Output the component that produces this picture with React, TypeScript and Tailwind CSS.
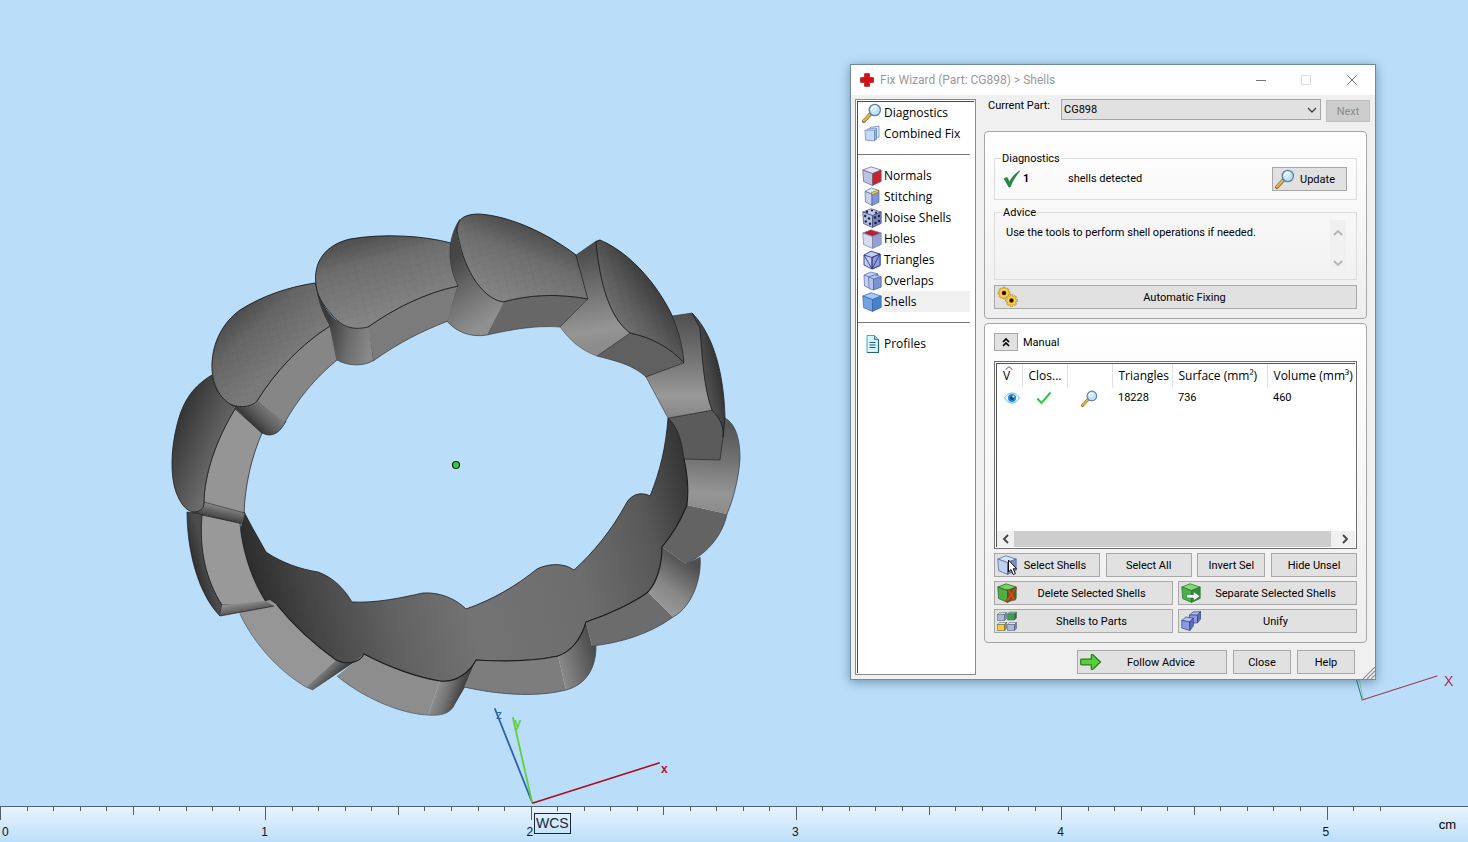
import type { ReactNode } from "react";

type CubeProps = { top: string; left: string; right: string; line?: string; size?: string; children?: ReactNode };

function Cube({ top, left, right, line = "#4a5f96", size = "size-5", children }: CubeProps) {
  return (
    <svg viewBox="0 0 20 20" className={`${size} shrink-0`} aria-hidden="true" strokeLinejoin="round">
      <path d="M.8 4 9 .8 19.2 4 10.5 7.6Z" fill={top} stroke={line} strokeWidth=".7" />
      <path d="M.8 4 10.5 7.6V19.4L1.6 15.6Z" fill={left} stroke={line} strokeWidth=".7" />
      <path d="M10.5 7.6 19.2 4V15.4L10.5 19.4Z" fill={right} stroke={line} strokeWidth=".7" />
      {children}
    </svg>
  );
}

function Magnifier({ size = "size-5" }: { size?: string }) {
  return (
    <svg viewBox="0 0 20 20" className={`${size} shrink-0`} aria-hidden="true">
      <path d="M1.8 18.2 8.2 11.2" stroke="#8a6a2c" strokeWidth="3.600" strokeLinecap="round" />
      <path d="M2 17.8 7.6 11.8" stroke="#e2b650" strokeWidth="2.200" strokeLinecap="round" />
      <circle cx="12.8" cy="7" r="5.6" fill="#bfe2f7" stroke="#5d83a6" strokeWidth="1.4" />
      <path d="M9.6 6.4c.4-1.8 2.200-3 4.200-2.600" stroke="#fff" strokeWidth="1.400" fill="none" strokeLinecap="round" />
      <path d="m10.500 9 4.500-4.500" stroke="#e8f6ff" strokeWidth="1.500" />
    </svg>
  );
}

function CombinedIcon() {
  return (
    <svg viewBox="0 0 20 20" className="size-5 shrink-0" aria-hidden="true" stroke="#6f8fc4" strokeWidth=".8" strokeLinejoin="round">
      <path d="M8 3.500 17 2v11l-9 1.500Z" fill="#dce8fa" />
      <path d="M5.500 5 14.500 4v11l-9 1Z" fill="#cfe0f8" />
      <path d="M3 6.200h9.500V17L3.500 16Z" fill="#c6daf6" />
      <path d="m12.500 6.200 2-1.700V15l-2 2Z" fill="#8fb0e2" />
    </svg>
  );
}

function StitchingIcon() {
  return (
    <svg viewBox="0 0 20 20" className="size-5 shrink-0" aria-hidden="true" stroke="#55689e" strokeWidth=".7" strokeLinejoin="round">
      <path d="M3 4.500 9.500 1 17 3.500 10 7Z" fill="#e3e9f8" />
      <path d="m3 4.500 7 2.500v11.500l-6.500-3.500Z" fill="#c6d2f0" />
      <path d="m10 7 7-3.500v11.800l-7 3.200Z" fill="#7f94d0" />
      <path d="M9.500 7.800V5.600L16.500 3v2.200Z" fill="#f3d95a" stroke="#8d7a21" />
    </svg>
  );
}

function NoiseIcon() {
  return (
    <Cube top="#c7d0ea" left="#b4c0e4" right="#7685bd" line="#3d4875">
      <g fill="#1d2440">
        <circle cx="5" cy="3.800" r="1.200" /><circle cx="10" cy="2.600" r="1.100" /><circle cx="14" cy="4.600" r="1.200" />
        <circle cx="3.200" cy="8" r="1.200" /><circle cx="7" cy="10.500" r="1.300" />
        <circle cx="3.800" cy="13.500" r="1.200" /><circle cx="8" cy="15.800" r="1.200" /><circle cx="13" cy="9.500" r="1.300" />
        <circle cx="17" cy="8" r="1.200" /><circle cx="13.500" cy="15" r="1.300" /><circle cx="17" cy="13" r="1.200" />
      </g>
    </Cube>
  );
}

function TrianglesIcon() {
  return (
    <svg viewBox="0 0 20 20" className="size-5 shrink-0" aria-hidden="true" stroke="#303c86" strokeWidth=".9" strokeLinejoin="round">
      <path d="M2 5 9 1.200 18 4v11.500L10 19 2 15Z" fill="#c3cdf0" />
      <path d="m10 7.500 8-3.500v11.500L10 19Z" fill="#8e9dda" />
      <path d="m2 5 8 2.500L18 4M10 7.500V19M2 5l8 14 8-15" fill="none" />
    </svg>
  );
}

function OverlapsIcon() {
  return (
    <svg viewBox="0 0 20 20" className="size-5 shrink-0" aria-hidden="true" stroke="#5669a8" strokeWidth=".7" strokeLinejoin="round">
      <path d="M2 4 9 1l7 2-1 12-7 2.500-5.500-2.500Z" fill="#c3d0f0" />
      <path d="m2 4 5.500 2.200L16 3" fill="none" />
      <path d="m6.500 6 6-2.200L19 5.500V16l-8 3-4-1.500Z" fill="#b3c3ec" />
      <path d="M11.500 8 19 5.500V16l-7.500 3Z" fill="#7d92d2" />
      <path d="m6.500 6 5 2v11" fill="none" />
    </svg>
  );
}

function ProfilesIcon() {
  return (
    <svg viewBox="0 0 20 20" className="size-5 shrink-0" aria-hidden="true" strokeLinejoin="round">
      <path d="M5 1.500h7.500l4 4v13H5Z" fill="#d9f4f8" stroke="#4aa5b5" />
      <path d="M5 18.500h11.500v-13" fill="none" stroke="#1f6a7a" strokeWidth="1.200" />
      <path d="M12.500 1.500v4h4" fill="#8fd3df" stroke="#2e8798" />
      <path d="M7.500 8.500h6M7.500 11h6M7.500 13.500h6" stroke="#1e5b82" strokeWidth="1.100" />
    </svg>
  );
}

function Check({ thick = false }: { thick?: boolean }) {
  return thick ? (
    <svg viewBox="0 0 18 18" className="size-[18px]" aria-hidden="true">
      <path d="M1 8.500 4.200 7.500 6.500 12C9 7 12.500 3 17 .8 13 5.500 9.500 11 7.200 17H5.800Z" fill="#23864a" stroke="#146034" strokeWidth=".5" />
    </svg>
  ) : (
    <svg viewBox="0 0 16 16" className="size-4" aria-hidden="true">
      <path d="M1.200 8.500 5.500 13 14.500 2.500" fill="none" stroke="#2fc44f" strokeWidth="2" />
    </svg>
  );
}

function Eye() {
  return (
    <svg viewBox="0 0 16 12" className="h-3 w-4" aria-hidden="true">
      <path d="M.6 6C3 2.200 5.500 1 8 1s5 1.200 7.400 5C13 9.800 10.500 11 8 11S3 9.800.6 6Z" fill="#eaf5fd" stroke="#6db4e2" />
      <circle cx="8" cy="6" r="4" fill="#2189cf" />
      <circle cx="8" cy="6" r="1.900" fill="#0b3f73" />
      <circle cx="9.300" cy="4.600" r="1" fill="#fff" />
    </svg>
  );
}

function Gear({ cx, cy }: { cx: number; cy: number }) {
  return (
    <g transform={`translate(${cx} ${cy})`}>
      {[0, 45, 90, 135].map((a) => (
        <rect key={a} x="-1.400" y="-6" width="2.800" height="12" rx=".6" fill="#f0bb3c" stroke="#a87a2a" strokeWidth=".5" transform={`rotate(${a})`} />
      ))}
      <circle r="4.200" fill="#f7d24e" />
      <circle r="2.300" fill="#5a1f10" />
      <circle r="1.500" fill="#1d0a05" />
    </g>
  );
}

function GearsIcon() {
  return (
    <svg viewBox="0 0 22 22" className="size-[22px]" aria-hidden="true">
      <Gear cx={7} cy={7} />
      <Gear cx={14.5} cy={14.5} />
    </svg>
  );
}

function SelectShellsIcon() {
  return (
    <Cube top="#dbe3f8" left="#c4d0f2" right="#7f90cc">
      <path d="M11.500 5v12l2.500-2.400 2.200 5 2.200-1-2.200-4.800h3.400Z" fill="#fff" stroke="#111" strokeWidth="1" />
    </Cube>
  );
}

function DeleteShellsIcon() {
  return (
    <Cube top="#7fcf62" left="#4fae44" right="#2f7c34" line="#245e28">
      <path d="m9.500 6.500 3 .4 2 2.600L17.500 5l2.300-.2-3.600 6.400 2.600 5.600-3 .8-1.800-3.400-2.600 4-3 .4 4.200-7Z" fill="#d9481c" stroke="#8a2a0f" strokeWidth=".5" />
    </Cube>
  );
}

function SeparateShellsIcon() {
  return (
    <Cube top="#8bd672" left="#4bb14a" right="#2f8f3c" line="#257030">
      <path d="M5.500 11.500h7V8.600l6.500 4.700-6.500 4.500V15h-7Z" fill="#f2fff0" stroke="#257030" strokeWidth=".6" />
    </Cube>
  );
}

function PartsIcon() {
  const boxes = [
    { x: 0, y: 1, front: "#a9bbd9", top: "#dbe5f4", side: "#7b8fb8" },
    { x: 10, y: 0.5, front: "#3fa04a", top: "#7fce80", side: "#26732f" },
    { x: 0, y: 11, front: "#f6cf2d", top: "#fbe98a", side: "#b58e12" },
    { x: 10, y: 11, front: "#a9b9dd", top: "#dce5f6", side: "#6f82ad" },
  ];
  return (
    <svg viewBox="0 0 20 20" className="size-5" aria-hidden="true" stroke="#4c5a70" strokeWidth=".5" strokeLinejoin="round">
      {boxes.map((b, i) => (
        <g key={i} transform={`translate(${b.x} ${b.y})`}>
          <path d="M.5 2.500 2.500.5h7l-2 2Z" fill={b.top} />
          <path d="M.5 2.500h7v6h-7Z" fill={b.front} />
          <path d="m7.500 2.500 2-2v6l-2 2Z" fill={b.side} />
        </g>
      ))}
    </svg>
  );
}

function UnifyIcon() {
  return (
    <svg viewBox="0 0 20 20" className="size-5" aria-hidden="true" stroke="#333f86" strokeWidth=".7" strokeLinejoin="round">
      <path d="m8.500 4 3.500-3 7.500-.5-3 3.700Z" fill="#b2bfee" />
      <path d="m8.500 4 8 .2v7.600l-8 .7Z" fill="#8c9ce0" />
      <path d="m16.500 4.200 3-3.700v7.600l-3 3.700Z" fill="#5c6dbd" />
      <path d="m.8 9.500 4-3.500 7.500 1-3.500 4Z" fill="#b2bfee" />
      <path d="m.8 9.500 8 1.500v8.500l-8-2.500Z" fill="#8c9ce0" />
      <path d="m8.800 11 3.500-4v8l-3.500 4.500Z" fill="#5c6dbd" />
    </svg>
  );
}

function ArrowIcon() {
  return (
    <svg viewBox="0 0 22 18" className="h-[18px] w-[22px]" aria-hidden="true">
      <path d="M1.500 6.200h9.800V2.500q0-1.500 1.600-.8L20.500 9l-7.600 7.300q-1.600.7-1.600-.8v-3.700H1.500q-.8 0-.8-1V7q0-.8.8-.8Z" fill="#58cf3a" stroke="#2a7a1c" strokeWidth="1.200" strokeLinejoin="round" />
    </svg>
  );
}

function Chevron({ dir, tone = "#404040", weight = 1.8 }: { dir: "up" | "down" | "left" | "right"; tone?: string; weight?: number }) {
  const d = { up: "M1 7 5 3l4 4", down: "M1 3l4 4 4-4", left: "M7 1 3 5l4 4", right: "M3 1l4 4-4 4" }[dir];
  return (
    <svg viewBox="0 0 10 10" className="size-[10px] shrink-0" aria-hidden="true">
      <path d={d} fill="none" stroke={tone} strokeWidth={weight} />
    </svg>
  );
}

const EDGE = "#1c1c1c";

const DOME_H = "M315 283C288 287 262 296 240 310 222 323 213 343 212 363 211 384 220 399 232 405 242 408 251 407 257 401 275 372 300 345 330 326L322 300Z";
const DOME_I = "M316 285C313 262 325 245 350 239 385 233 425 236 451 243L458 286C425 293 395 308 368 327 352 331 341 326 332 315 322 304 317 295 316 285Z";
const DOME_J = "M457 230C457 218 466 214 479 214 510 216 547 233 576 255L588 299C555 293 528 295 503 302 480 298 462 265 457 230Z";
const DOME_K = "M596 242 600 240C638 256 668 300 678 330 682 344 684 355 684 363 670 347 650 337 630 333 610 318 600 285 596 242Z";

function Ring() {
  return (
    <g strokeLinejoin="round">
      <defs>
        <pattern id="mesh" width="9" height="7" patternUnits="userSpaceOnUse" patternTransform="rotate(-14)">
          <path d="M0 0H9M0 0V7" stroke="#000" strokeOpacity=".04" strokeWidth="1.500" />
        </pattern>
        <linearGradient id="inner" gradientUnits="userSpaceOnUse" x1="245" y1="560" x2="690" y2="450">
          <stop offset="0" stopColor="#2c2c2c" />
          <stop offset=".12" stopColor="#464646" />
          <stop offset=".28" stopColor="#616161" />
          <stop offset=".45" stopColor="#737373" />
          <stop offset=".7" stopColor="#6d6d6d" />
          <stop offset=".87" stopColor="#585858" />
          <stop offset="1" stopColor="#303030" />
        </linearGradient>
        <linearGradient id="domeA" gradientUnits="userSpaceOnUse" x1="172" y1="440" x2="222" y2="462">
          <stop offset="0" stopColor="#383838" />
          <stop offset="1" stopColor="#6e6e6e" />
        </linearGradient>
        <linearGradient id="domeB" gradientUnits="userSpaceOnUse" x1="190" y1="560" x2="205" y2="556">
          <stop offset="0" stopColor="#2c2c2c" />
          <stop offset="1" stopColor="#4c4c4c" />
        </linearGradient>
        <linearGradient id="domeH" gradientUnits="userSpaceOnUse" x1="225" y1="315" x2="275" y2="370">
          <stop offset="0" stopColor="#474747" />
          <stop offset=".4" stopColor="#666666" />
          <stop offset="1" stopColor="#7a7a7a" />
        </linearGradient>
        <linearGradient id="domeI" gradientUnits="userSpaceOnUse" x1="360" y1="234" x2="383" y2="318">
          <stop offset="0" stopColor="#4c4c4c" />
          <stop offset=".35" stopColor="#6e6e6e" />
          <stop offset="1" stopColor="#858585" />
        </linearGradient>
        <linearGradient id="domeJ" gradientUnits="userSpaceOnUse" x1="530" y1="226" x2="503" y2="295">
          <stop offset="0" stopColor="#4c4c4c" />
          <stop offset=".4" stopColor="#6e6e6e" />
          <stop offset="1" stopColor="#838383" />
        </linearGradient>
        <linearGradient id="domeK" gradientUnits="userSpaceOnUse" x1="654" y1="282" x2="615" y2="312">
          <stop offset="0" stopColor="#3c3c3c" />
          <stop offset=".6" stopColor="#5c5c5c" />
          <stop offset="1" stopColor="#6e6e6e" />
        </linearGradient>
        <linearGradient id="domeL" gradientUnits="userSpaceOnUse" x1="722" y1="370" x2="704" y2="374">
          <stop offset="0" stopColor="#2f2f2f" />
          <stop offset="1" stopColor="#505050" />
        </linearGradient>
        <linearGradient id="bevA" gradientUnits="userSpaceOnUse" x1="226" y1="506" x2="223" y2="520">
          <stop offset="0" stopColor="#8c8c8c" />
          <stop offset="1" stopColor="#3f3f3f" />
        </linearGradient>
        <linearGradient id="bevB" gradientUnits="userSpaceOnUse" x1="244" y1="602" x2="246" y2="614">
          <stop offset="0" stopColor="#919191" />
          <stop offset="1" stopColor="#4a4a4a" />
        </linearGradient>
        <linearGradient id="bevC" gradientUnits="userSpaceOnUse" x1="320" y1="668" x2="334" y2="682">
          <stop offset="0" stopColor="#959595" />
          <stop offset="1" stopColor="#333333" />
        </linearGradient>
        <linearGradient id="bevD" gradientUnits="userSpaceOnUse" x1="434" y1="692" x2="464" y2="702">
          <stop offset="0" stopColor="#929292" />
          <stop offset=".4" stopColor="#747474" />
          <stop offset="1" stopColor="#303030" />
        </linearGradient>
        <linearGradient id="bevE" gradientUnits="userSpaceOnUse" x1="561" y1="670" x2="597" y2="660">
          <stop offset="0" stopColor="#8a8a8a" />
          <stop offset="1" stopColor="#4c4c4c" />
        </linearGradient>
        <linearGradient id="bevF" gradientUnits="userSpaceOnUse" x1="660" y1="604" x2="690" y2="562">
          <stop offset="0" stopColor="#979797" />
          <stop offset=".35" stopColor="#878787" />
          <stop offset="1" stopColor="#4e4e4e" />
        </linearGradient>
        <linearGradient id="bevG" gradientUnits="userSpaceOnUse" x1="712" y1="425" x2="706" y2="510">
          <stop offset="0" stopColor="#565656" />
          <stop offset=".4" stopColor="#727272" />
          <stop offset=".8" stopColor="#969696" />
          <stop offset="1" stopColor="#8c8c8c" />
        </linearGradient>
        <linearGradient id="bevH" gradientUnits="userSpaceOnUse" x1="246" y1="424" x2="268" y2="402">
          <stop offset="0" stopColor="#2a2a2a" />
          <stop offset=".5" stopColor="#5c5c5c" />
          <stop offset="1" stopColor="#858585" />
        </linearGradient>
        <linearGradient id="bevI" gradientUnits="userSpaceOnUse" x1="325" y1="335" x2="373" y2="345">
          <stop offset="0" stopColor="#3a3a3a" />
          <stop offset=".5" stopColor="#6c6c6c" />
          <stop offset="1" stopColor="#8b8b8b" />
        </linearGradient>
        <linearGradient id="bevJ" gradientUnits="userSpaceOnUse" x1="452" y1="260" x2="492" y2="318">
          <stop offset="0" stopColor="#464646" />
          <stop offset=".5" stopColor="#6e6e6e" />
          <stop offset="1" stopColor="#909090" />
        </linearGradient>
        <linearGradient id="bevK" gradientUnits="userSpaceOnUse" x1="586" y1="250" x2="600" y2="345">
          <stop offset="0" stopColor="#4c4c4c" />
          <stop offset=".5" stopColor="#777777" />
          <stop offset=".85" stopColor="#969696" />
          <stop offset="1" stopColor="#8c8c8c" />
        </linearGradient>
        <linearGradient id="bevL" gradientUnits="userSpaceOnUse" x1="684" y1="315" x2="684" y2="416">
          <stop offset="0" stopColor="#505050" />
          <stop offset=".45" stopColor="#757575" />
          <stop offset=".8" stopColor="#999999" />
          <stop offset="1" stopColor="#888888" />
        </linearGradient>
      </defs>

      <path d="M244 512 252 527 266 552C282 563 300 569 318 572 332 577 343 587 352 602 378 603 400 598 423 593 439 592 455 598 466 609 492 600 516 586 537 569 547 564 563 562 574 570 593 553 612 530 627 502 633 493 643 492 650 496 660 472 666 446 668 418L678 424 684 459C687 472 689 488 687 505 681 520 672 535 662 547 662 565 657 582 648 592 635 602 610 614 586 622 581 640 570 652 558 656 540 660 510 662 476 660 470 672 456 683 440 681 420 678 390 668 364 654 360 662 348 666 336 660 315 645 293 625 277 605L262 606 236 560Z" fill="url(#inner)" stroke={EDGE} strokeWidth=".8" />

      <path d="M236 608 270 600 277 605C293 625 315 645 336 660L306 687C280 672 254 644 240 614Z" fill="#969696" />
      <path d="M187 512 203 514C200 550 206 580 222 605L220 616C198 594 187 550 187 512Z" fill="url(#domeB)" stroke={EDGE} strokeWidth=".7" />
      <path d="M202 515 240 523C242 550 252 582 268 605L222 605C206 580 199 550 202 515Z" fill="#999999" stroke={EDGE} strokeWidth=".8" />
      <path d="M222 605 266 601 274 606 220 616Z" fill="url(#bevB)" />
      <path d="M274 606 220 616" stroke={EDGE} strokeWidth=".7" />
      <path d="M336 660C344 664 350 664 356 661L313 690 306 687Z" fill="url(#bevC)" />
      <path d="M240 614C254 644 280 672 306 687L313 690" fill="none" stroke="#4a5560" strokeWidth=".7" />
      <path d="M364 654C390 668 420 678 440 681L428 715C400 714 362 697 337 676Z" fill="#8d8d8d" />
      <path d="M440 681C456 683 470 672 476 660L465 687 454 706C449 714 440 716 428 715Z" fill="url(#bevD)" />
      <path d="M337 676C362 697 400 714 428 715 440 716 449 714 454 706" fill="none" stroke="#4a5560" strokeWidth=".7" />
      <path d="M476 660C510 662 540 660 558 656L566 690C534 698 495 694 464 687Z" fill="#7d7d7d" />
      <path d="M558 656C570 652 581 640 586 622L592 646 596 646C596 666 588 684 566 690Z" fill="url(#bevE)" />
      <path d="M586 622C610 614 635 602 648 592L673 617C650 634 620 643 592 646Z" fill="#6c6c6c" />
      <path d="M648 592C657 582 662 565 662 547L686 564 700 557C702 578 692 607 673 617Z" fill="url(#bevF)" />
      <path d="M662 547C672 535 681 520 687 505L727 514C723 533 710 552 686 564Z" fill="#636363" />
      <path d="M687 505C689 488 687 472 684 459L684 430 725 418C736 424 740 440 740 458 739 478 733 500 727 514Z" fill="url(#bevG)" />
      <path d="M725 418C736 424 740 440 740 458 739 478 733 500 727 514 723 533 710 552 686 564M700 557C702 578 692 607 673 617 650 634 620 643 592 646M596 646C596 666 588 684 566 690 534 698 495 694 464 687" fill="none" stroke="#3c444c" strokeWidth=".8" />
      <path d="M684 459C687 472 689 488 687 505 681 520 672 535 662 547 662 565 657 582 648 592 635 602 610 614 586 622 581 640 570 652 558 656 540 660 510 662 476 660 470 672 456 683 440 681 420 678 390 668 364 654 360 662 348 666 336 660 315 645 293 625 277 605" fill="none" stroke={EDGE} strokeWidth="1.100" />

      <path d="M235 409C216 440 204 475 204 503L244 514C245 484 252 456 262 433Z" fill="#959595" stroke={EDGE} strokeWidth=".7" />
      <path d="M192 512C198 511 203 509 204 502L245 513 243 524Z" fill="url(#bevA)" stroke={EDGE} strokeWidth=".5" />
      <path d="M212 375C190 388 182 405 177 425 171 448 170 475 176 492 181 505 187 512 195 512 202 511 204 507 204 503 204 475 216 440 235 409L232 405C220 397 213 387 212 375Z" fill="url(#domeA)" stroke={EDGE} strokeWidth=".8" />

      <path d="M330 326C300 345 275 372 257 401L284 424C297 400 315 378 337 360Z" fill="#868686" stroke={EDGE} strokeWidth=".6" />
      <path d="M232 405C242 408 251 407 257 401L285 422C280 433 272 438 262 433Z" fill="url(#bevH)" />
      <path d={DOME_H} fill="url(#domeH)" stroke={EDGE} strokeWidth=".9" />
      <path d="M235 408 262 433C272 438 280 433 286 421" fill="none" stroke={EDGE} strokeWidth=".7" />

      <path d="M458 286C425 293 395 308 368 327L373 361C400 342 420 332 448 321Z" fill="#7b7b7b" stroke={EDGE} strokeWidth=".6" />
      <path d="M316 284C320 303 330 318 345 326 354 329 362 329 369 327L373 361C364 367 347 366 337 360L330 326C323 315 317 300 316 284Z" fill="url(#bevI)" />
      <path d={DOME_I} fill="url(#domeI)" stroke={EDGE} strokeWidth=".9" />
      <path d="M337 360C347 366 364 367 374 360" fill="none" stroke="#3c444c" strokeWidth=".7" />

      <path d="M503 302C528 295 555 293 588 299L560 327C535 325 510 330 487 335Z" fill="#676767" stroke={EDGE} strokeWidth=".5" />
      <path d="M460 219C448 237 446 262 458 286L447 321C455 331 470 338 487 335L504 302C480 298 459 258 457 230Z" fill="url(#bevJ)" />
      <path d={DOME_J} fill="url(#domeJ)" stroke={EDGE} strokeWidth=".9" />
      <path d="M460 219C448 237 446 262 458 286M447 321C455 331 470 338 487 335" fill="none" stroke="#343a40" strokeWidth=".7" />

      <path d="M630 333C650 337 670 347 684 363L646 377C632 364 615 361 597 356Z" fill="#606060" stroke={EDGE} strokeWidth=".5" />
      <path d="M576 255 596 241 600 240C600 290 612 320 630 333L597 356C580 350 570 340 560 327L588 299Z" fill="url(#bevK)" stroke={EDGE} strokeWidth=".4" />
      <path d={DOME_K} fill="url(#domeK)" stroke={EDGE} strokeWidth=".9" />

      <path d="M668 418 712 410C722 420 725 430 723 437L720 460 684 459C682 440 677 426 668 418Z" fill="#5b5b5b" stroke={EDGE} strokeWidth=".6" />
      <path d="M672 316 692 313 702 332C704 370 706 395 713 410L668 418 646 377 684 363C683 348 679 332 672 316Z" fill="url(#bevL)" stroke={EDGE} strokeWidth=".5" />
      <path d="M692 313C714 335 724 375 725 418L723 437C724 426 720 418 712 410 704 390 702 355 700 328Z" fill="url(#domeL)" stroke={EDGE} strokeWidth=".8" />
      <path d={`${DOME_H}${DOME_I}${DOME_J}${DOME_K}`} fill="url(#mesh)" />
    </g>
  );
}

function Scene() {
  return (
    <svg className="absolute inset-0 h-full w-full" role="img" aria-label="Ring model with coordinate axes">
      <Ring />
      <circle cx="456" cy="465" r="3.500" fill="#35c94a" stroke="#10240f" strokeWidth="1.200" />
      <g fill="none" strokeLinecap="round">
        <path d="M495 709 532 802" stroke="#2f62ad" strokeWidth="1.800" />
        <path d="M513 718 532 802" stroke="#5fd03a" strokeWidth="1.800" />
        <path d="M533 803 659 763" stroke="#a80f22" strokeWidth="1.800" />
        <path d="M1356 678 1362 699" stroke="#2b6f8d" />
        <path d="M1359 678 1363 699" stroke="#6cc98f" strokeWidth=".8" />
        <path d="M1362 700 1437 676" stroke="#a3385c" strokeWidth="1.200" />
      </g>
      <g fontFamily="Liberation Sans, sans-serif">
        <text x="496" y="719" fontSize="12" fill="#2f62ad">z</text>
        <text x="514" y="727" fontSize="13" fontWeight="700" fill="#5fd03a">y</text>
        <text x="661" y="773" fontSize="12" fontWeight="700" fill="#b0152a">x</text>
        <text x="1444" y="686" fontSize="14" fill="#b02a50">X</text>
      </g>
    </svg>
  );
}

function Ruler() {
  const pitch = 26.53;
  const ticks = Array.from({ length: 53 }, (_, i) => i);
  return (
    <footer className="relative mt-auto h-9 border-t border-[#49647c] bg-linear-to-b from-[#e9f3fc] to-[#bcdffb]">
      <svg className="block h-full w-full" role="img" aria-label="Ruler in centimetres">
        {ticks.map((i) => (
          <line key={i} x1={Math.round(i * pitch) + 0.5} x2={Math.round(i * pitch) + 0.5} y1="0" y2={i % 10 === 0 ? 13 : i % 5 === 0 ? 8 : 4} stroke="#4d6072" />
        ))}
        <g fontFamily="Liberation Sans, sans-serif" fontSize="12" fill="#111">
          {[0, 1, 2, 3, 4, 5].map((n) => (
            <text key={n} x={n === 0 ? 2 : n * pitch * 10 - 4} y="29">{n}</text>
          ))}
        </g>
      </svg>
      <span className="absolute right-3 top-2.5 font-['Liberation_Sans',sans-serif] text-[13px] leading-4 text-black">cm</span>
      <span className="absolute left-[534px] top-1.5 border border-[#15293a] px-px font-['Liberation_Sans',sans-serif] text-[14px] leading-[19px] text-[#15293a]">WCS</span>
    </footer>
  );
}

type NavItem = { label: string; icon: ReactNode; active?: boolean };

const navGroups: NavItem[][] = [
  [
    { label: "Diagnostics", icon: <Magnifier /> },
    { label: "Combined Fix", icon: <CombinedIcon /> },
  ],
  [
    { label: "Normals", icon: <Cube top="#e3e6f4" left="#b9c3e2" right="#c8242f" line="#6b5d7e" /> },
    { label: "Stitching", icon: <StitchingIcon /> },
    { label: "Noise Shells", icon: <NoiseIcon /> },
    { label: "Holes", icon: <Cube top="#b91f3a" left="#d5dbf1" right="#92a2d4" line="#7a7fae" /> },
    { label: "Triangles", icon: <TrianglesIcon /> },
    { label: "Overlaps", icon: <OverlapsIcon /> },
    { label: "Shells", icon: <Cube top="#a6c8f2" left="#6fa3e4" right="#4a7fcb" line="#3763a6" />, active: true },
  ],
  [{ label: "Profiles", icon: <ProfilesIcon /> }],
];

function Sidebar() {
  return (
    <nav className="w-[121px] shrink-0 border border-[#8a8a8a] bg-white p-px font-['Open_Sans','Noto_Sans',sans-serif]">
      <div className="h-full border-l border-t border-[#4a4a4a] pr-1">
        {navGroups.map((group, g) => (
          <ul key={g} className={g === 0 ? "" : "mt-2.5 border-t border-[#777] pt-2.5"}>
            {group.map((item) => (
              <li key={item.label}>
                <button type="button" className="flex h-[21px] w-full items-center pl-1 text-left text-[12px] leading-[21px] text-black">
                  {item.icon}
                  <span className={item.active ? "flex-1 bg-[#f0f0f0] pl-0.5" : "flex-1 pl-0.5"}>{item.label}</span>
                </button>
              </li>
            ))}
          </ul>
        ))}
      </div>
    </nav>
  );
}

function PushButton({ children, icon, className = "" }: { children: ReactNode; icon?: ReactNode; className?: string }) {
  return (
    <button type="button" className={`flex h-6 items-center border border-[#a8a8a8] bg-[#e1e1e1] pl-0.5 text-black ${icon ? "pr-1.5" : "pr-0.5"} ${className}`}>
      {icon}
      <span className="flex-1 whitespace-nowrap pt-px text-center">{children}</span>
    </button>
  );
}

function ShellTable() {
  const head = "h-6 border-r border-[#e2e2e2] px-1.5 text-left font-normal whitespace-nowrap";
  return (
    <div className="flex h-[188px] flex-col border border-[#6e6e6e] bg-white p-px">
      <div className="flex flex-1 flex-col border-l border-t border-[#555]">
        <table className="w-full table-fixed border-collapse">
          <thead className="font-['Open_Sans','Noto_Sans',sans-serif] text-[12px]">
            <tr>
              <th scope="col" className={`${head} relative w-[25px]`}>
                <svg viewBox="0 0 8 4" className="absolute left-2 top-0.5 h-1 w-2" aria-hidden="true">
                  <path d="m.5 3.700 3.500-3 3.500 3" fill="none" stroke="#555" />
                </svg>
                V
              </th>
              <th scope="col" className={`${head} w-[45px]`}>Clos...</th>
              <th scope="col" className={`${head} w-[45px]`} aria-label="Inspect" />
              <th scope="col" className={`${head} w-[60px]`}>Triangles</th>
              <th scope="col" className={`${head} w-[95px]`}>Surface (mm²)</th>
              <th scope="col" className="h-6 whitespace-nowrap pl-1.5 text-left font-normal">Volume (mm³)</th>
            </tr>
          </thead>
          <tbody className="text-[11px]">
            <tr className="h-5">
              <td className="pl-[7px]"><Eye /></td>
              <td className="pl-3.5"><Check /></td>
              <td className="pl-3.5"><Magnifier size="size-[17px]" /></td>
              <td className="px-1.5">18228</td>
              <td className="px-1.5">736</td>
              <td className="px-1.5">460</td>
            </tr>
          </tbody>
        </table>
        <div className="mt-auto flex h-4 items-center bg-[#f0f0f0]">
          <span className="flex w-[17px] justify-center"><Chevron dir="left" /></span>
          <span className="h-full flex-1 bg-[#cdcdcd]" />
          <span className="flex w-6 justify-center pl-1"><Chevron dir="right" /></span>
        </div>
      </div>
    </div>
  );
}

function FixWizard() {
  return (
    <section
      aria-label="Fix Wizard"
      className="absolute left-[850px] top-16 flex w-[526px] flex-col border border-[#6f8ba3] bg-[#f0f0f0] font-[Roboto,'Open_Sans',sans-serif] text-[11px] leading-4 text-black shadow-[0_2px_10px_rgba(20,50,80,0.45)]"
    >
      <header className="flex h-[30px] items-center bg-white pl-[9px] text-[#999]">
        <svg viewBox="0 0 14 14" className="size-[14px]" aria-hidden="true">
          <path d="M4.500 1q0-.6.600-.6h3.800q.6 0 .6.6v3.500H13q.6 0 .6.600v3.800q0 .6-.6.600H9.500V13q0 .6-.6.600H5.100q-.6 0-.6-.6V9.500H1q-.6 0-.6-.6V5.100q0-.6.600-.6h3.500Z" fill="#d80f12" stroke="#8e0d0d" strokeWidth=".6" />
        </svg>
        <h1 className="ml-1.5 text-[12px]">Fix Wizard (Part: CG898) &gt; Shells</h1>
        <div className="ml-auto flex text-[#777]">
          <button type="button" aria-label="Minimize" className="flex w-[45px] justify-center">
            <svg viewBox="0 0 12 12" className="size-3"><path d="M1 6.500h10" stroke="#777" /></svg>
          </button>
          <button type="button" aria-label="Maximize" disabled className="flex w-[45px] justify-center">
            <svg viewBox="0 0 12 12" className="size-3"><path d="M1.500 1.500h9v9h-9Z" fill="none" stroke="#dcdcdc" /></svg>
          </button>
          <button type="button" aria-label="Close window" className="flex w-[47px] justify-center">
            <svg viewBox="0 0 12 12" className="size-3"><path d="m1 1 10 10M11 1 1 11" stroke="#777" /></svg>
          </button>
        </div>
      </header>

      <div className="flex gap-2 py-1 pl-1 pr-[5px]">
        <Sidebar />
        <div className="flex flex-1 flex-col">
          <div className="flex h-[23px] pl-1">
            <label htmlFor="part" className="-mt-px w-[73px]">Current Part:</label>
            <div className="relative mb-0.5 flex-1">
              <select id="part" className="h-full w-full appearance-none border border-[#a5a5a5] bg-[#e1e1e1] pl-0.5 pt-px">
                <option>CG898</option>
              </select>
              <span className="pointer-events-none absolute right-1 top-[6px]">
                <Chevron dir="down" weight={1.3} />
              </span>
            </div>
            <button type="button" disabled className="ml-[5px] mt-px w-11 border border-[#bfbfbf] bg-[#cccccc] pt-px text-[#8b8b8b]">Next</button>
          </div>

          <div className="mr-[3px] mt-[9px] rounded-[4px] border border-[#a6a6a6] bg-linear-to-b from-white to-[#eeeeee] px-[9px] pb-[9px] pt-[18px]">
            <fieldset className="h-[50px] border border-[#dcdcdc] px-1.5">
              <legend className="px-px pt-px leading-[15px]">Diagnostics</legend>
              <div className="flex h-[26px] items-center">
                <span className="ml-0.5"><Check thick /></span>
                <strong className="ml-0.5 w-[45px]">1</strong>
                <span>shells detected</span>
                <PushButton icon={<Magnifier />} className="ml-auto mr-[3px] w-[75px]">Update</PushButton>
              </div>
            </fieldset>
            <fieldset className="mt-1 h-[76px] border border-[#dcdcdc] pl-[11px] pr-2.5">
              <legend className="-ml-1 px-px pt-px leading-[15px]">Advice</legend>
              <div className="flex h-[50px] justify-between">
                <p className="pt-[5px]">Use the tools to perform shell operations if needed.</p>
                <div className="flex w-4 flex-col items-center justify-between bg-[#f0f0f0] pb-0.5 pt-2">
                  <Chevron dir="up" tone="#b4b4b4" />
                  <Chevron dir="down" tone="#b4b4b4" />
                </div>
              </div>
            </fieldset>
            <PushButton icon={<GearsIcon />} className="mt-[5px] w-full">Automatic Fixing</PushButton>
          </div>

          <div className="mr-[3px] mt-1 rounded-[4px] border border-[#a6a6a6] bg-linear-to-b from-white to-[#eeeeee] px-[9px] py-[9px]">
            <div className="flex h-[18px] items-center gap-[5px]">
              <button type="button" aria-label="Collapse manual tools" className="flex h-[18px] w-6 items-center justify-center border border-[#a8a8a8] bg-[#e1e1e1]">
                <svg viewBox="0 0 8 10" className="h-[10px] w-2"><path d="M1 5 4 2l3 3M1 9l3-3 3 3" fill="none" stroke="#000" strokeWidth="1.700" /></svg>
              </button>
              <span className="pt-px">Manual</span>
            </div>
            <div className="mt-[10px]"><ShellTable /></div>
            <div className="mt-1 flex flex-col gap-1">
              <div className="flex items-center justify-between">
                <PushButton icon={<SelectShellsIcon />} className="w-[106px]">Select Shells</PushButton>
                <PushButton className="w-[86px]">Select All</PushButton>
                <PushButton className="w-[68px]">Invert Sel</PushButton>
                <PushButton className="w-[86px]">Hide Unsel</PushButton>
              </div>
              <div className="grid grid-cols-2 gap-x-[5px] gap-y-1">
                <PushButton icon={<DeleteShellsIcon />}>Delete Selected Shells</PushButton>
                <PushButton icon={<SeparateShellsIcon />}>Separate Selected Shells</PushButton>
                <PushButton icon={<PartsIcon />}>Shells to Parts</PushButton>
                <PushButton icon={<UnifyIcon />}>Unify</PushButton>
              </div>
            </div>
          </div>

          <div className="mb-px mr-[15px] mt-[7px] flex justify-end gap-1.5">
            <PushButton icon={<ArrowIcon />} className="w-[150px]">Follow Advice</PushButton>
            <PushButton className="w-[58px]">Close</PushButton>
            <PushButton className="w-[58px]">Help</PushButton>
          </div>
        </div>
      </div>
      <svg viewBox="0 0 12 12" className="absolute bottom-0 right-0 size-3" aria-hidden="true">
        <path d="M0 12 12 0M4 12l8-8M8 12l4-4" stroke="#8f8f8f" strokeWidth="1.200" />
      </svg>
    </section>
  );
}

export default function App() {
  return (
    <main className="relative flex min-h-screen flex-col overflow-hidden bg-[#badefa]">
      <Scene />
      <Ruler />
      <FixWizard />
    </main>
  );
}
